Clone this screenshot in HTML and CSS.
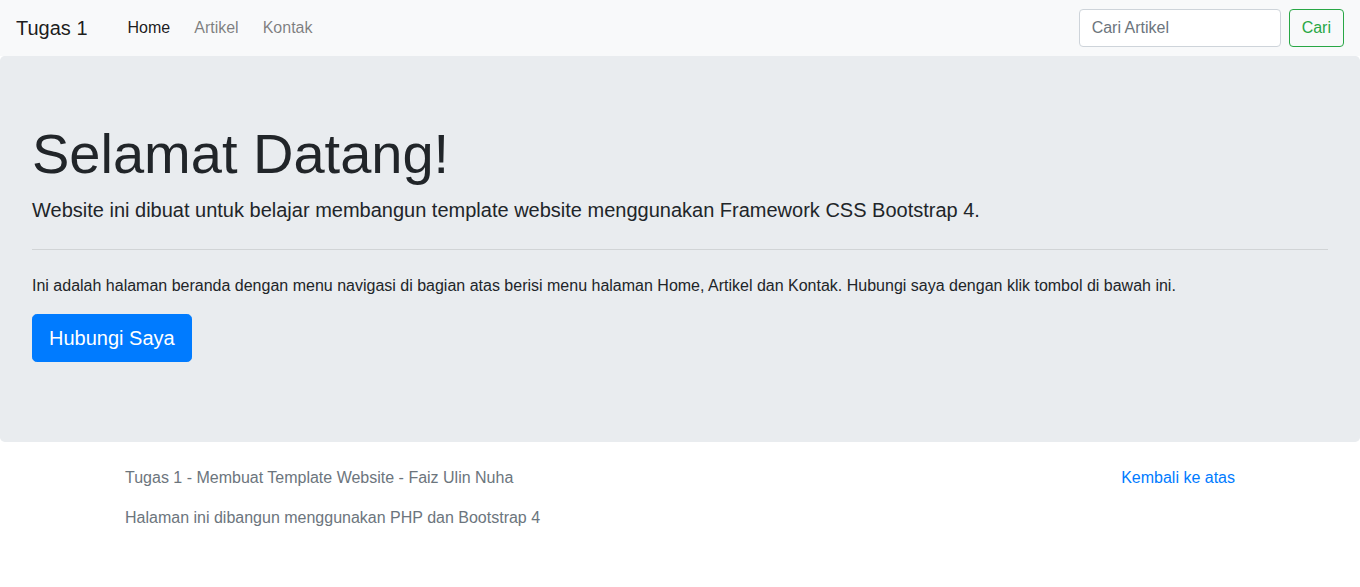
FILE: index.html
```html
<!DOCTYPE html>
<html lang="id">
<head>
<meta charset="utf-8">
<title>Tugas 1</title>
<link rel="stylesheet" href="styles.css">
</head>
<body>
<nav class="navbar">
  <a class="brand" href="#">Tugas 1</a>
  <ul class="nav">
    <li><a class="nav-link active" href="#">Home</a></li>
    <li><a class="nav-link" href="#">Artikel</a></li>
    <li><a class="nav-link" href="#">Kontak</a></li>
  </ul>
  <form class="search">
    <input class="search-input" type="search" placeholder="Cari Artikel">
    <button class="btn-outline-success" type="submit">Cari</button>
  </form>
</nav>
<main class="jumbotron">
  <h1 class="display">Selamat Datang!</h1>
  <p class="lead">Website ini dibuat untuk belajar membangun template website menggunakan Framework CSS Bootstrap 4.</p>
  <hr class="divider">
  <p class="body-text">Ini adalah halaman beranda dengan menu navigasi di bagian atas berisi menu halaman Home, Artikel dan Kontak. Hubungi saya dengan klik tombol di bawah ini.</p>
  <p class="lead action"><a class="btn-primary" href="#">Hubungi Saya</a></p>
</main>
<footer class="footer">
  <p class="back-top"><a href="#">Kembali ke atas</a></p>
  <p class="muted">Tugas 1 - Membuat Template Website - Faiz Ulin Nuha</p>
  <p class="muted">Halaman ini dibangun menggunakan PHP dan Bootstrap 4</p>
</footer>
</body>
</html>
```
FILE: styles.css
```css
* { box-sizing: border-box; }
html, body { margin: 0; padding: 0; }
body {
  font-family: "Liberation Sans", Arial, sans-serif;
  font-size: 16px;
  line-height: 1.5;
  color: #212529;
  background: #fff;
}
a { text-decoration: none; }

.navbar {
  display: flex;
  align-items: center;
  height: 56px;
  padding: 8px 16px;
  background: #f8f9fa;
}
.brand {
  font-size: 20px;
  line-height: 30px;
  padding: 5px 0;
  color: rgba(0,0,0,.9);
  margin-right: 16px;
}
.nav {
  display: flex;
  list-style: none;
  margin: 0 auto 0 12px;
  padding: 0;
}
.nav-link {
  display: block;
  padding: 8px 12px;
  color: rgba(0,0,0,.5);
}
.nav-link.active { color: rgba(0,0,0,.9); }

.search { display: flex; align-items: center; }
.search-input {
  width: 202px;
  height: 38px;
  padding: 6px 12px;
  font: inherit;
  color: #495057;
  background: #fff;
  border: 1px solid #ced4da;
  border-radius: 4px;
  margin-right: 8px;
}
.search-input::placeholder { color: #6c757d; }
.btn-outline-success {
  height: 38px;
  padding: 6px 12px;
  font: inherit;
  color: #28a745;
  background: transparent;
  border: 1px solid #28a745;
  border-radius: 4px;
}

.jumbotron {
  display: block;
  background: #e9ecef;
  border-radius: 4.8px;
  padding: 64px 32px;
  margin-bottom: 24px;
}
.display {
  font-size: 56px;
  font-weight: 300;
  line-height: 1.2;
  margin: 0 0 8px;
}
.lead {
  font-size: 20px;
  font-weight: 300;
  margin: 0 0 16px;
}
.divider {
  margin: 24px 0;
  border: 0;
  border-top: 1px solid rgba(0,0,0,.1);
}
.body-text { margin: 0 0 16px; }
.action { margin-bottom: 16px; }
.btn-primary {
  display: inline-block;
  padding: 8px 16px;
  font-size: 20px;
  line-height: 1.5;
  color: #fff;
  background: #007bff;
  border: 1px solid #007bff;
  border-radius: 4.8px;
}

.footer {
  width: 1140px;
  margin: 0 auto;
  padding: 0 15px;
}
.footer p { margin: 0 0 16px; }
.back-top { float: right; }
.back-top a { color: #007bff; }
.muted { color: #6c757d; }
```
